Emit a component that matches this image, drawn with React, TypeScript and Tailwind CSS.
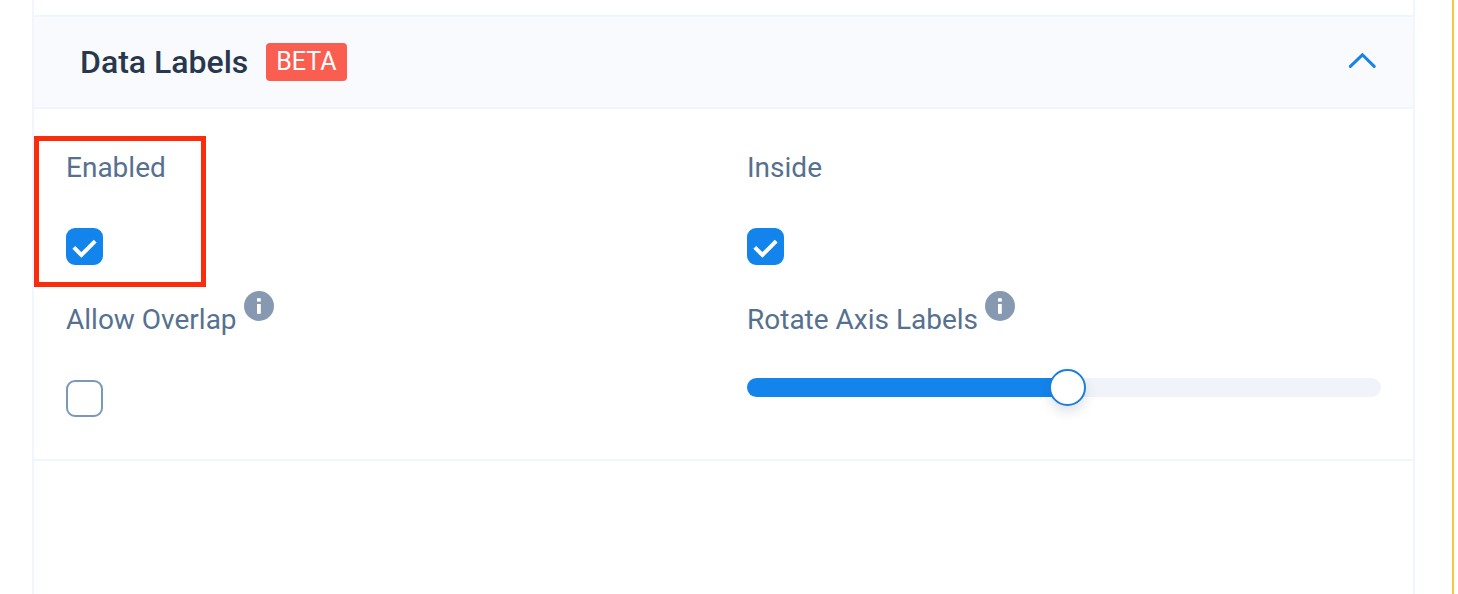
import { useId, useState } from "react";
import type { ReactNode } from "react";

const MIN_ANGLE = -90;
const MAX_ANGLE = 90;

function InfoButton({ label }: { label: string }) {
  return (
    <button type="button" aria-label={label} className="mt-px size-[30px] self-start">
      <svg viewBox="0 0 30 30" className="size-full" aria-hidden="true">
        <circle cx="15" cy="15" r="15" fill="#8699b1" />
        <rect x="13" y="7.2" width="3.8" height="3.4" fill="#fff" />
        <rect x="13" y="13" width="3.8" height="9.8" fill="#fff" />
      </svg>
    </button>
  );
}

type FieldProps = {
  id: string;
  label: string;
  info?: string;
  children: ReactNode;
};

function Field({ id, label, info, children }: FieldProps) {
  return (
    <div>
      <div className="flex h-12 items-end gap-[7px]">
        <label htmlFor={id} className="text-[28px] leading-9 text-[#56718f]">
          {label}
        </label>
        {info && <InfoButton label={info} />}
      </div>
      {children}
    </div>
  );
}

type CheckboxFieldProps = {
  label: string;
  info?: string;
  defaultChecked?: boolean;
};

function CheckboxField({ label, info, defaultChecked = false }: CheckboxFieldProps) {
  const id = useId();
  return (
    <Field id={id} label={label} info={info}>
      <div className="mt-[42px] grid size-[37px]">
        <input
          id={id}
          type="checkbox"
          defaultChecked={defaultChecked}
          className="peer col-start-1 row-start-1 size-full appearance-none rounded-[9px] border-2 border-[#7a98b8] bg-white checked:border-[#1284ec] checked:bg-[#1284ec]"
        />
        <svg
          viewBox="0 0 37 37"
          fill="none"
          aria-hidden="true"
          className="pointer-events-none invisible col-start-1 row-start-1 size-full peer-checked:visible"
        >
          <path d="M7.8 19.4 15.4 27 29.2 13.2" stroke="#fff" strokeWidth="4" />
        </svg>
      </div>
    </Field>
  );
}

function AngleField({ label, info }: { label: string; info: string }) {
  const id = useId();
  const [angle, setAngle] = useState(1);
  const percent = ((angle - MIN_ANGLE) / (MAX_ANGLE - MIN_ANGLE)) * 100;

  return (
    <Field id={id} label={label} info={info}>
      <input
        id={id}
        type="range"
        min={MIN_ANGLE}
        max={MAX_ANGLE}
        value={angle}
        onChange={(e) => setAngle(Number(e.target.value))}
        style={{
          backgroundImage: `linear-gradient(to right, #1284ec ${percent}%, #f0f4fa ${percent}%)`,
        }}
        className="mt-10 block h-[19px] w-full appearance-none rounded-full [&::-webkit-slider-thumb]:size-[37px] [&::-webkit-slider-thumb]:appearance-none [&::-webkit-slider-thumb]:rounded-full [&::-webkit-slider-thumb]:border-2 [&::-webkit-slider-thumb]:border-[#1c7fd8] [&::-webkit-slider-thumb]:bg-white [&::-webkit-slider-thumb]:shadow-[0_6px_12px_rgba(30,50,80,0.14)]"
      />
    </Field>
  );
}

export default function App() {
  const [open, setOpen] = useState(true);

  return (
    <div className="mr-1 min-h-screen border-r-2 border-[#f7c83c] bg-white pr-[37px] pl-8 font-['Roboto',sans-serif]">
      <main className="relative min-h-screen border-x-2 border-[#eff6fd] pt-[15px]">
        <section className="border-y-2 border-[#eff6fd]">
          <h2>
            <button
              type="button"
              aria-expanded={open}
              onClick={() => setOpen(!open)}
              className="flex h-[90px] w-full items-center bg-[#f9fafe] pr-9 pl-[46px]"
            >
              <span className="text-[32px] leading-10 font-medium text-[#27384c]">Data Labels</span>
              <span className="ml-[18px] rounded-[4px] bg-[#fa5e50] px-[10px] text-[25px] leading-[38px] font-normal text-white">
                BETA
              </span>
              <svg
                viewBox="0 0 30 18"
                fill="none"
                aria-hidden="true"
                className={open ? "ml-auto h-[18px] w-[30px]" : "ml-auto h-[18px] w-[30px] rotate-180"}
              >
                <path
                  d="M3.4 13.4 15.4 1.8 27.2 13.4"
                  stroke="#1a82e0"
                  strokeWidth="3"
                  strokeLinecap="round"
                />
              </svg>
            </button>
          </h2>
          {open && (
            <div className="grid grid-cols-2 gap-x-[47px] gap-y-[25px] border-t-2 border-[#eff6fd] px-8 pt-[29px] pb-[42px]">
              <CheckboxField label="Enabled" defaultChecked />
              <CheckboxField label="Inside" defaultChecked />
              <CheckboxField label="Allow Overlap" info="About allowing overlap" />
              <AngleField label="Rotate Axis Labels" info="About rotating axis labels" />
            </div>
          )}
        </section>
        {/* highlight around the Enabled option */}
        <div className="pointer-events-none absolute top-[136px] left-0 h-[151px] w-[172px] border-5 border-[#fb2c0c]" />
      </main>
    </div>
  );
}
